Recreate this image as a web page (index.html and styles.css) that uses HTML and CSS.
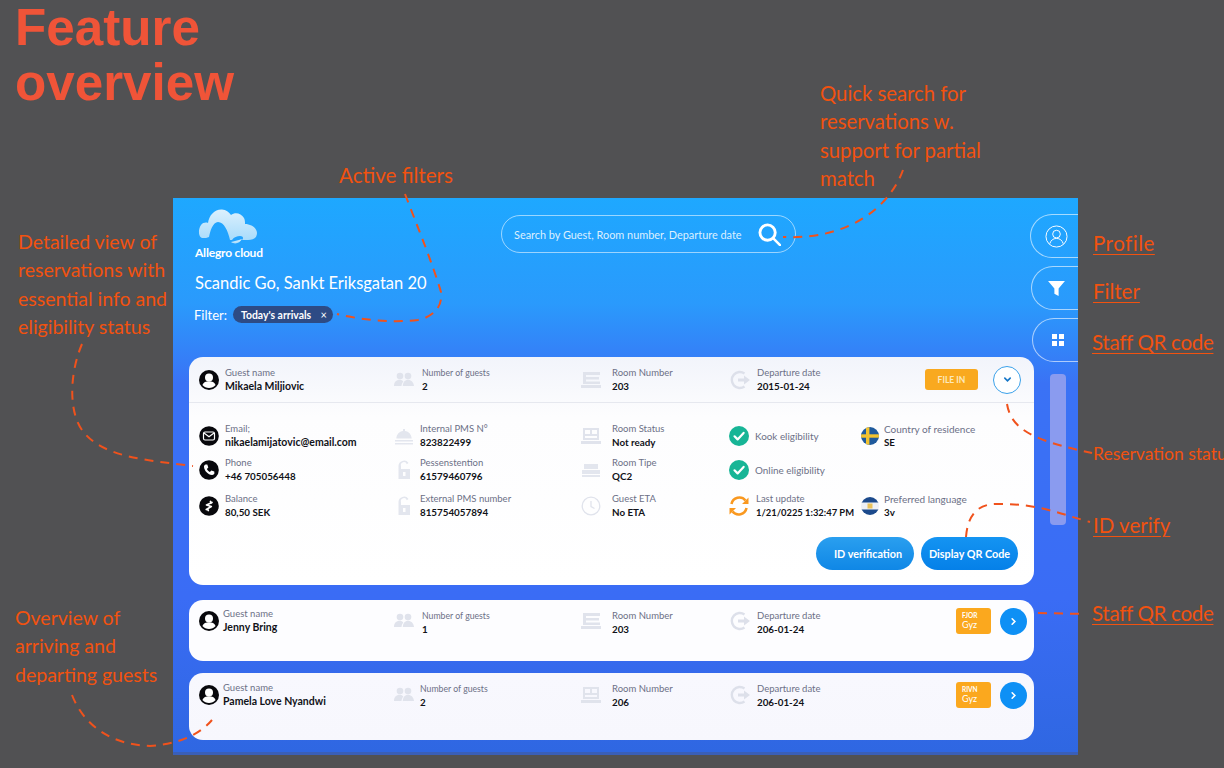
FILE: index.html
```html
<!DOCTYPE html>
<html lang="en">
<head>
<meta charset="utf-8">
<title>Feature overview</title>
<link rel="stylesheet" href="styles.css">
</head>
<body>
<svg class="defs" aria-hidden="true">
  <symbol id="i-person" viewBox="0 0 20 20"><circle cx="10" cy="10" r="10" fill="#08080c"/><circle cx="10" cy="7.4" r="4" fill="#fff"/><path d="M3.400 15c1-3 3.600-3.800 6.600-3.800s5.600.8 6.600 3.800c-1.600 1.900-4.100 2.900-6.600 2.900s-5-1-6.600-2.900z" fill="#fff"/></symbol>
  <symbol id="i-guests" viewBox="0 0 20 20"><g fill="#e0e3ec"><circle cx="6" cy="6" r="3.300"/><circle cx="14" cy="6" r="3.300"/><path d="M0 16c0-4 2.500-6.200 5.500-6.200 1.700 0 3 .6 3.800 1.700-1 1.100-1.600 2.600-1.800 4.500z"/><path d="M8.800 16c.2-4 2.300-6.200 5.200-6.200s5.500 2.200 6 6.200z"/></g></symbol>
  <symbol id="i-room" viewBox="0 0 20 20"><path fill="#e0e3ec" d="M2 2h17v3H5v2h13v2.500H5v2h14V14H2zM0 15h20v3H0z"/></symbol>
  <symbol id="i-room2" viewBox="0 0 20 20"><path fill="#e0e3ec" fill-rule="evenodd" d="M2 2h16v12H2zM4 4v4h5V4zm7 0v4h5V4zM4 10v2h12v-2zM0 15h20v3H0z"/></symbol>
  <symbol id="i-depart" viewBox="0 0 22 20"><path fill="none" stroke="#dde0ea" stroke-width="2.400" d="M15.500 3.500A8 8 0 1 0 15.500 16.500"/><path fill="#dde0ea" d="M9 8.500h6V5.500l6 4.500-6 4.500v-3H9z"/></symbol>
  <symbol id="i-mail" viewBox="0 0 20 20"><circle cx="10" cy="10" r="9.800" fill="#08080c"/><rect x="4.500" y="6" width="11" height="8" rx="1.500" fill="none" stroke="#fff" stroke-width="1.200"/><path d="M5 7l5 3.800L15 7" fill="none" stroke="#fff" stroke-width="1.200"/></symbol>
  <symbol id="i-phone" viewBox="0 0 20 20"><circle cx="10" cy="10" r="9.800" fill="#08080c"/><path fill="#fff" d="M6.300 4.500l2 .1 1 3-1.400 1.300c.6 1.300 1.700 2.400 3 3l1.400-1.400 3 1 .1 2.100c-.3 1-1.300 1.500-2.400 1.400-4-.5-7.600-4.200-8-8.100-.1-1.100.5-2.100 1.800-2.400z"/></symbol>
  <symbol id="i-money" viewBox="0 0 20 20"><circle cx="10" cy="10" r="9.800" fill="#08080c"/><path fill="none" stroke="#fff" stroke-width="1.700" stroke-linecap="round" stroke-linejoin="round" d="M13 6.500L7.500 9l4.800 1.500-5 3M11.500 5.500l.8 1.500M8.500 13l.8 1.500"/></symbol>
  <symbol id="i-bell" viewBox="0 0 20 20"><path fill="#e3e6ee" d="M9 3h2v2.100c3.800.5 6.300 3.300 6.700 7.400H2.300C2.700 8.400 5.200 5.600 9 5.100zM1 14h18v1.600H1zM1 17h18v1.400H1z"/></symbol>
  <symbol id="i-lock" viewBox="0 0 14 20"><path fill="#e3e6ee" fill-rule="evenodd" d="M1.500 9V6a5.500 5.500 0 0 1 10-3L9.800 4.200A3 3 0 0 0 4 6v3h9v10H1.500zM6 12v4h2.500v-4z"/></symbol>
  <symbol id="i-bed" viewBox="0 0 20 20"><path fill="#e3e6ee" d="M3 4h14v5H3zM1 10h18v4H1zM1 15h18v2H1z"/></symbol>
  <symbol id="i-clock" viewBox="0 0 20 20"><circle cx="10" cy="10" r="8.800" fill="none" stroke="#e0e3ec" stroke-width="1.300"/><path d="M10 5v5.500l3.500 2" fill="none" stroke="#e0e3ec" stroke-width="1.300"/></symbol>
  <symbol id="i-check" viewBox="0 0 20 20"><circle cx="10" cy="10" r="10" fill="#17b596"/><path d="M5.500 10.300l3.100 3.100 6-6.500" fill="none" stroke="#fff" stroke-width="2.200" stroke-linecap="round" stroke-linejoin="round"/></symbol>
  <symbol id="i-sync" viewBox="0 0 22 22"><g fill="none" stroke="#f9981f" stroke-width="2.600"><path d="M3.500 9A8 8 0 0 1 17.500 5.500"/><path d="M18.500 13A8 8 0 0 1 4.500 16.500"/></g><path fill="#f9981f" d="M20.500 2.500v6.500h-6.500zM1.500 19.500V13h6.500z"/></symbol>
  <symbol id="i-se" viewBox="0 0 18 18"><rect width="18" height="18" fill="#1f5a9c"/><rect x="5" width="3.400" height="18" fill="#f2c230"/><rect y="7.300" width="18" height="3.400" fill="#f2c230"/></symbol>
  <symbol id="i-lang" viewBox="0 0 18 18"><rect width="18" height="18" fill="#eef0f5"/><rect width="18" height="5.500" fill="#1c4a8c"/><rect y="12.500" width="18" height="5.500" fill="#1c4a8c"/><rect x="6.500" y="6.500" width="5" height="5" fill="#e9c15a"/></symbol>
</svg>

<main class="page">
  <h1 class="title">Feature<br>overview</h1>

  <section class="panel">
    <header class="head">
      <div class="brand">
        <div class="logo">
          <svg class="logo-cloud" viewBox="0 0 60 38" aria-hidden="true">
            <defs><linearGradient id="cloud" x1="0" y1="0" x2="0" y2="1"><stop offset="0" stop-color="#dcf0fd"/><stop offset="1" stop-color="#a9dcfb"/></linearGradient></defs>
            <path fill="url(#cloud)" d="M5 29C0 29 0 20 3 16C5 13.500 8 13 10 14C11 6 17 0 24 .5C28 .7 31 3 33 6C37 3 43 4 46 9C47 11 47 13 47 15C53 15 59 19 59 24C59 29 55 31 50 31H44C46 29 45 27 42 27C39 27 36 28 34 31H32C30 22 26 13 20 13C15 13 12 22 11 28C9 29 7 29 5 29Z"/>
            <path fill="url(#cloud)" d="M33 33C37 36 42 34 44 30L41 31C38 32 36 32 33 33Z"/>
          </svg>
          <span class="logo-name">Allegro cloud</span>
        </div>
        <div class="hotel">Scandic Go, Sankt Eriksgatan 20</div>
        <div class="filter-row">
          <span class="filter-label">Filter:</span>
          <span class="chip">Today's arrivals <span class="chip-x">×</span></span>
        </div>
      </div>
      <div class="search">
        <span class="search-text">Search by Guest, Room number, Departure date</span>
        <svg class="search-icon" viewBox="0 0 24 24" aria-hidden="true"><circle cx="10" cy="10" r="8" fill="none" stroke="#fff" stroke-width="3"/><path d="M16 16l7 7" stroke="#fff" stroke-width="2.600" stroke-linecap="round"/></svg>
      </div>
      <nav class="rail">
        <div class="rail-tab rail-a"><svg class="rail-icon-lg" viewBox="0 0 24 24" aria-hidden="true"><circle cx="12" cy="12" r="11" fill="none" stroke="#fff" stroke-width="1"/><circle cx="12" cy="9.500" r="4" fill="none" stroke="#fff" stroke-width="1"/><path d="M5 19.500c1-3.500 3.500-5.500 7-5.500s6 2 7 5.500" fill="none" stroke="#fff" stroke-width="1"/></svg></div>
        <div class="rail-tab rail-b"><svg class="rail-icon-md" viewBox="0 0 18 18" aria-hidden="true"><path fill="#fff" d="M1 2h16l-6 7v7l-4-2V9z"/></svg></div>
        <div class="rail-tab rail-c"><svg class="rail-icon-sm" viewBox="0 0 12 12" aria-hidden="true"><path fill="#fff" d="M0 0h5v5H0zM7 0h5v5H7zM0 7h5v5H0zM7 7h5v5H7z"/></svg></div>
      </nav>
    </header>

    <div class="scroll-thumb"></div>

    <div class="cards">
      <article class="card card-open">
        <div class="grid row-head">
          <div class="field"><svg class="ico"><use href="#i-person"/></svg><div class="txt"><div class="lbl">Guest name</div><div class="val val-name">Mikaela Miljiovic</div></div></div>
          <div class="field"><svg class="ico"><use href="#i-guests"/></svg><div class="txt gap-guests"><div class="lbl lbl-tight">Number of guests</div><div class="val">2</div></div></div>
          <div class="field"><svg class="ico"><use href="#i-room"/></svg><div class="txt gap-room"><div class="lbl">Room Number</div><div class="val">203</div></div></div>
          <div class="field"><svg class="ico ico-wide"><use href="#i-depart"/></svg><div class="txt gap-dep"><div class="lbl">Departure date</div><div class="val">2015-01-24</div></div></div>
          <div class="actions">
            <span class="badge badge-wide">FILE IN</span>
            <span class="round round-outline"><svg class="chev" viewBox="0 0 10 10" aria-hidden="true"><path d="M2 3.500l3 3 3-3" fill="none" stroke="#1677c8" stroke-width="1.800" stroke-linecap="round"/></svg></span>
          </div>
        </div>
        <div class="grid details">
          <div class="field"><svg class="ico"><use href="#i-mail"/></svg><div class="txt"><div class="lbl">Email;</div><div class="val val-name">nikaelamijatovic@email.com</div></div></div>
          <div class="field"><svg class="ico"><use href="#i-bell"/></svg><div class="txt gap-detail"><div class="lbl">Internal PMS N°</div><div class="val">823822499</div></div></div>
          <div class="field"><svg class="ico"><use href="#i-room2"/></svg><div class="txt gap-room"><div class="lbl">Room Status</div><div class="val">Not ready</div></div></div>
          <div class="field"><svg class="ico"><use href="#i-check"/></svg><div class="lbl lbl-line">Kook eligibility</div></div>
          <div class="field"><svg class="flag"><use href="#i-se"/></svg><div class="txt"><div class="lbl lbl-wide">Country of residence</div><div class="val">SE</div></div></div>

          <div class="field"><svg class="ico"><use href="#i-phone"/></svg><div class="txt"><div class="lbl">Phone</div><div class="val">+46 705056448</div></div></div>
          <div class="field"><svg class="ico ico-lock"><use href="#i-lock"/></svg><div class="txt gap-detail"><div class="lbl">Pessenstention</div><div class="val">61579460796</div></div></div>
          <div class="field"><svg class="ico"><use href="#i-bed"/></svg><div class="txt gap-room"><div class="lbl">Room Tipe</div><div class="val">QC2</div></div></div>
          <div class="field"><svg class="ico"><use href="#i-check"/></svg><div class="lbl lbl-line">Online eligibility</div></div>
          <div></div>

          <div class="field"><svg class="ico"><use href="#i-money"/></svg><div class="txt"><div class="lbl">Balance</div><div class="val">80,50 SEK</div></div></div>
          <div class="field"><svg class="ico ico-lock"><use href="#i-lock"/></svg><div class="txt gap-detail"><div class="lbl">External PMS number</div><div class="val">815754057894</div></div></div>
          <div class="field"><svg class="ico"><use href="#i-clock"/></svg><div class="txt gap-room"><div class="lbl">Guest ETA</div><div class="val">No ETA</div></div></div>
          <div class="field"><svg class="ico ico-sync"><use href="#i-sync"/></svg><div class="txt"><div class="lbl">Last update</div><div class="val val-date">1/21/0225 1:32:47 PM</div></div></div>
          <div class="field"><svg class="flag"><use href="#i-lang"/></svg><div class="txt"><div class="lbl lbl-wide">Preferred language</div><div class="val">3v</div></div></div>
        </div>
        <div class="buttons">
          <button class="btn btn-id" type="button">ID verification</button>
          <button class="btn btn-qr" type="button">Display QR Code</button>
        </div>
      </article>

      <article class="card card-short">
        <div class="grid row-compact">
          <div class="field"><svg class="ico"><use href="#i-person"/></svg><div class="txt txt-name"><div class="lbl">Guest name</div><div class="val val-name">Jenny Bring</div></div></div>
          <div class="field"><svg class="ico"><use href="#i-guests"/></svg><div class="txt gap-guests"><div class="lbl lbl-tight">Number of guests</div><div class="val">1</div></div></div>
          <div class="field"><svg class="ico"><use href="#i-room"/></svg><div class="txt gap-room"><div class="lbl">Room Number</div><div class="val">203</div></div></div>
          <div class="field"><svg class="ico ico-wide"><use href="#i-depart"/></svg><div class="txt gap-dep"><div class="lbl">Departure date</div><div class="val">206-01-24</div></div></div>
          <div class="actions actions-compact">
            <span class="badge badge-small"><span class="badge-top">FJOR</span><span class="badge-low">Gyz</span></span>
            <span class="round round-solid"><svg class="chev" viewBox="0 0 10 10" aria-hidden="true"><path d="M3.500 2l3 3-3 3" fill="none" stroke="#fff" stroke-width="1.800" stroke-linecap="round"/></svg></span>
          </div>
        </div>
      </article>

      <article class="card card-tall">
        <div class="grid row-compact">
          <div class="field"><svg class="ico"><use href="#i-person"/></svg><div class="txt txt-name"><div class="lbl">Guest name</div><div class="val val-name">Pamela Love Nyandwi</div></div></div>
          <div class="field"><svg class="ico"><use href="#i-guests"/></svg><div class="txt gap-guests gap-guests-low"><div class="lbl lbl-tight">Number of guests</div><div class="val">2</div></div></div>
          <div class="field"><svg class="ico"><use href="#i-room2"/></svg><div class="txt gap-room"><div class="lbl">Room Number</div><div class="val">206</div></div></div>
          <div class="field"><svg class="ico ico-wide"><use href="#i-depart"/></svg><div class="txt gap-dep"><div class="lbl">Departure date</div><div class="val">206-01-24</div></div></div>
          <div class="actions actions-compact">
            <span class="badge badge-small"><span class="badge-top">RIVN</span><span class="badge-low">Gyz</span></span>
            <span class="round round-solid"><svg class="chev" viewBox="0 0 10 10" aria-hidden="true"><path d="M3.500 2l3 3-3 3" fill="none" stroke="#fff" stroke-width="1.800" stroke-linecap="round"/></svg></span>
          </div>
        </div>
      </article>
    </div>
  </section>

  <svg class="wires" viewBox="0 0 1224 768" aria-hidden="true">
    <g fill="none" stroke="#f0521c" stroke-width="2" stroke-dasharray="9 7">
      <path d="M405 194C418 228 432 262 441 292C443 308 432 317 418 320C392 323 362 320 337 314"/>
      <path d="M903 170C890 206 850 240 783 237"/>
      <path d="M82 344C70 372 68 410 82 430C102 458 148 460 193 466"/>
      <path d="M1007 404C1011 428 1030 440 1092 453"/>
      <path d="M966 537C968 512 980 503 1000 504C1040 504 1060 514 1090 522"/>
      <path d="M1038 613L1086 614"/>
      <path d="M72 695C84 726 112 745 150 746C180 744 200 734 212 720"/>
    </g>
  </svg>

  <p class="note note-search">Quick search for<br>reservations w.<br>support for partial<br>match</p>
  <p class="note note-active">Active filters</p>
  <p class="note note-detail">Detailed view of<br>reservations with<br>essential info and<br>eligibility status</p>
  <p class="note note-overview">Overview of<br>arriving and<br>departing guests</p>
  <p class="note link note-profile">Profile</p>
  <p class="note link note-filter">Filter</p>
  <p class="note link note-staff1">Staff QR code</p>
  <p class="note note-status">Reservation status</p>
  <p class="note link note-id">ID verify</p>
  <p class="note link note-staff2">Staff QR code</p>
</main>
</body>
</html>
```
FILE: styles.css
```css
* { box-sizing: border-box; }
html, body { margin: 0; height: 100%; }
body { background: #515153; overflow: hidden; font-family: "Lato", "Liberation Sans", sans-serif; }
.defs { display: none; }
.page { position: relative; width: 1224px; height: 768px; overflow: hidden; padding-top: 1px; }

.title { margin: 0 0 87px 15px; height: 110px; font: 700 51.200px/54.500px "Liberation Sans", Arial, sans-serif; color: #f05438; }

.panel { position: relative; width: 905px; height: 557px; margin-left: 173px; overflow: hidden;
  background: linear-gradient(180deg, #1ea8ff 0, #2a9afc 105px, #3a72f5 185px, #3a6cf5 400px, #2f67e2 554px, #3a5fb8 554px); }

.head { display: flex; align-items: flex-start; height: 159px; padding-left: 22px; }
.brand { width: 306px; flex: none; padding-top: 11px; }
.logo { display: flex; flex-direction: column; width: 70px; }
.logo-cloud { display: block; width: 60px; height: 38px; margin-left: 3px; }
.logo-name { font-size: 12px; font-weight: 700; color: #fff; letter-spacing: -.2px; line-height: 12px; white-space: nowrap; }
.hotel { margin-top: 13px; font-size: 16.500px; line-height: 22px; color: #fff; white-space: nowrap; }
.filter-row { display: flex; align-items: center; gap: 6px; margin: 12px 0 0 -1px; }
.filter-label { font-size: 13px; color: #fff; }
.chip { display: flex; align-items: center; justify-content: space-between; width: 100px; height: 17px; padding: 0 6px 0 8px; border-radius: 9px; background: #2d4b85; color: #fff; font-size: 10.400px; font-weight: 700; white-space: nowrap; }
.chip-x { font-weight: 400; font-size: 11px; }

.search { display: flex; align-items: center; justify-content: space-between; width: 295px; height: 38px; margin-top: 17px; padding: 0 14px 0 12px; border: 1px solid rgba(255,255,255,.55); border-radius: 20px; flex: none; }
.search-text { font-size: 10.900px; color: rgba(255,255,255,.85); white-space: nowrap; }
.search-icon { width: 23px; height: 23px; flex: none; }

.rail { display: flex; flex-direction: column; align-items: flex-end; gap: 8px; margin-left: auto; padding-top: 16px; height: 165px; }
.rail-tab { display: flex; align-items: center; justify-content: center; flex: none; height: 44px; border: 1px solid rgba(255,255,255,.6); border-right: 0; border-radius: 22px 0 0 22px; }
.rail-a { width: 48px; padding-left: 3px; }
.rail-b { width: 47px; padding-left: 3px; }
.rail-c { width: 46px; padding-left: 4px; }
.rail-icon-lg { width: 23px; height: 23px; }
.rail-icon-md { width: 19px; height: 19px; }
.rail-icon-sm { width: 12px; height: 12px; }

.scroll-thumb { position: absolute; left: 877px; top: 176px; width: 16px; height: 151px; border-radius: 4px; background: #8a9bef; }

.cards { display: flex; flex-direction: column; gap: 12px; width: 845px; margin-left: 16px; position: relative; }
.card { position: relative; border-radius: 14px; background: linear-gradient(180deg, #f2f4fb 0, #fdfdfe 60px, #fff 100%); }
.card-open { height: 228px; margin-bottom: 3px; }
.card-short { height: 61px; background: #fdfdff; }
.card-tall { height: 67px; background: linear-gradient(180deg, #f8f8fe, #f7f7fd); }

.grid { display: grid; grid-template-columns: 195px 187px 148px 131px 1fr; padding-left: 10px; }
.row-head { height: 46px; align-items: center; border-bottom: 1px solid #e6e8ef; }
.details { grid-template-rows: 34px 34px 38px; align-items: center; padding-top: 16px; }
.row-compact { height: 28px; margin-top: 6px; align-items: center; }
.card-tall .row-compact { margin-top: 8px; }

.field { display: flex; align-items: center; min-width: 0; }
.ico { width: 20px; height: 20px; flex: none; }
.ico-wide { width: 22px; }
.ico-lock { width: 14px; margin: 0 3px; }
.ico-sync { width: 22px; height: 22px; margin-left: -1px; }
.flag { width: 18px; height: 18px; margin-left: 1px; flex: none; border-radius: 50%; }
.txt { margin-left: 6px; min-width: 0; }
.txt-name { margin-left: 4px; }
.gap-guests { margin-left: 8px; }
.gap-guests-low { margin-left: 6px; }
.gap-room { margin-left: 11px; }
.gap-dep { margin-left: 6px; }
.gap-detail { margin-left: 6px; }
.details .field:nth-child(5n) .txt { margin-left: 5px; }
.card-short .gap-guests, .card-short .gap-room, .card-short .gap-dep { margin-top: 4px; }
.card-tall .gap-guests, .card-tall .gap-room, .card-tall .gap-dep { margin-top: 2px; }

.lbl { font-size: 9.500px; line-height: 12px; color: #6c7086; white-space: nowrap; }
.lbl-tight { font-size: 8.700px; }
.lbl-wide { font-size: 10px; }
.lbl-line { margin-left: 6px; font-size: 9.900px; }
.val { font-size: 9.800px; line-height: 13px; font-weight: 700; color: #111218; white-space: nowrap; margin-top: 1px; }
.val-name { font-size: 10.500px; }
.val-date { font-size: 9.400px; }

.actions { display: flex; align-items: center; justify-content: flex-end; padding-right: 13px; }
.actions-compact { padding-right: 7px; gap: 9px; }
.badge { display: flex; align-items: center; justify-content: center; border-radius: 3px; background: #f9a91f; color: #fff; }
.badge-wide { width: 53px; height: 21px; font-size: 8.500px; font-weight: 700; margin-right: 15px; color: #fde9bd; }
.badge-small { flex-direction: column; align-items: flex-start; width: 35px; height: 26px; padding-left: 6px; background: #fba81e; }
.badge-top { font-size: 6.500px; line-height: 8px; font-weight: 700; }
.badge-low { font-size: 9px; line-height: 10px; }
.round { display: flex; align-items: center; justify-content: center; border-radius: 50%; flex: none; }
.round-outline { width: 28px; height: 28px; border: 1.500px solid #3ba1ea; background: #fff; }
.round-solid { width: 27px; height: 27px; background: #0e90f5; }
.chev { width: 9px; height: 9px; }

.buttons { display: flex; justify-content: flex-end; gap: 7px; padding: 12px 16px 0 0; }
.btn { height: 33px; border: 0; border-radius: 17px; color: #fff; font: 700 10.800px "Lato", sans-serif; white-space: nowrap; padding: 0; }
.btn-id { width: 98px; background: linear-gradient(180deg, #2a9fef, #0f87e6); padding-left: 6px; }
.btn-qr { width: 97px; background: linear-gradient(180deg, #1494f2, #0580e8); }

.wires { position: absolute; left: 0; top: 0; width: 1224px; height: 768px; pointer-events: none; }

.note { position: absolute; margin: 0; font-size: 19.500px; line-height: 28.300px; color: #f2520f; white-space: nowrap; }
.link { text-decoration: underline; text-underline-offset: 3px; text-decoration-thickness: 1px; font-size: 20.500px; }
.note-search { left: 820px; top: 79px; font-size: 20.300px; }
.note-active { left: 339px; top: 161px; font-size: 20.600px; }
.note-detail { left: 18px; top: 228px; }
.note-overview { left: 15px; top: 604px; }
.note-profile { left: 1093px; top: 229px; letter-spacing: .5px; }
.note-filter { left: 1093px; top: 277px; }
.note-staff1 { left: 1092px; top: 328px; letter-spacing: -.3px; }
.note-status { left: 1093px; top: 440px; font-size: 17.500px; }
.note-id { left: 1093px; top: 511px; }
.note-staff2 { left: 1092px; top: 599px; letter-spacing: -.3px; }
```
